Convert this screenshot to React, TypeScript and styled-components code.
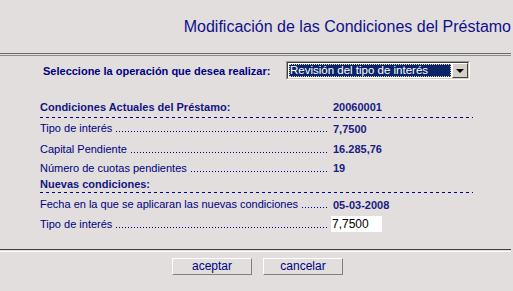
import React from "react";
import styled, { createGlobalStyle } from "styled-components";

const GlobalStyle = createGlobalStyle`
  html, body {
    margin: 0;
    padding: 0;
    background: #e1dedd;
  }
  body {
    font-family: "Liberation Sans", Arial, sans-serif;
  }
`;

const Page = styled.div`
  width: 513px;
  height: 291px;
  background: #e1dedd;
  color: #000080;
  overflow: hidden;
  display: flex;
  flex-direction: column;
`;

const Header = styled.div`
  height: 53px;
  display: flex;
  align-items: center;
  justify-content: flex-end;
  padding: 1px 2px 0 0;
  box-sizing: border-box;
`;

const Title = styled.h1`
  margin: 0;
  font-size: 16px;
  font-weight: normal;
  color: #10108a;
  white-space: nowrap;
`;

const Rule = styled.div<{ $light?: boolean }>`
  height: 1px;
  border-top: 1px solid ${(p) => (p.$light ? "#404040" : "#6a6a6a")};
  border-bottom: 1px solid ${(p) => (p.$light ? "#ffffff" : "#8c8c8c")};
  margin-right: 2px;
`;

const Main = styled.div`
  height: 193px;
  padding: 5px 0 0 40px;
  box-sizing: border-box;
`;

const SelectRow = styled.div`
  height: 19px;
  margin-left: 3px;
  display: flex;
  align-items: center;
  gap: 3px;
`;

const SelectLabel = styled.span`
  font-size: 11px;
  font-weight: bold;
  white-space: nowrap;
  width: 240px;
`;

const SelectBox = styled.div`
  width: 184px;
  height: 19px;
  box-sizing: border-box;
  border: 1px solid #ffffff;
  border-top-color: #9a9a9a;
  border-left-color: #9a9a9a;
  display: flex;
`;

const SelectInner = styled.div`
  flex: 1;
  display: flex;
  border: 1px solid #404040;
  border-bottom-color: #d4d0c8;
  border-right-color: #d4d0c8;
  background: #ffffff;
`;

const SelectValue = styled.div`
  flex: 1;
  background: #0a246a;
  color: #ffffff;
  font-size: 11.5px;
  line-height: 13px;
  padding-left: 1px;
  margin: 1px;
  outline: 1px dotted #e8d68a;
  outline-offset: -1px;
  white-space: nowrap;
  overflow: hidden;
`;

const SelectButton = styled.div`
  width: 16px;
  box-sizing: border-box;
  background: #d4d0c8;
  border: 1px solid #ffffff;
  border-right-color: #404040;
  border-bottom-color: #404040;
  display: flex;
  align-items: center;
  justify-content: center;
`;

const Arrow = styled.span`
  width: 0;
  height: 0;
  border-left: 4px solid transparent;
  border-right: 4px solid transparent;
  border-top: 4px solid #000000;
  margin-top: 1px;
`;

const Table = styled.div`
  margin-top: 17px;
  width: 433px;
  display: flex;
  flex-direction: column;
`;

const Row = styled.div<{ $h: number }>`
  height: ${(p) => p.$h}px;
  display: flex;
  align-items: center;
  font-size: 11px;
`;

const LabelCell = styled.div`
  width: 290px;
  display: flex;
  align-items: flex-end;
  line-height: 13px;
  white-space: nowrap;
`;

const Label = styled.span<{ $bold?: boolean }>`
  font-weight: ${(p) => (p.$bold ? "bold" : "normal")};
  font-size: 11px;
  color: ${(p) => (p.$bold ? "#141482" : "#000080")};
  padding-right: 4px;
`;

const Leader = styled.span`
  flex: 1;
  height: 1px;
  margin: 0 3px 3px 0;
  background: repeating-linear-gradient(to right, #000080 0 1px, transparent 1px 3px);
`;

const Value = styled.span`
  margin-left: 3px;
  font-weight: bold;
  font-size: 11px;
  color: #1a1a82;
`;

const Dash = styled.div`
  height: 1px;
  background: repeating-linear-gradient(to right, #000080 0 3px, transparent 3px 6px);
`;

const Input = styled.input`
  margin-left: 1px;
  width: 51px;
  height: 16px;
  box-sizing: border-box;
  border: none;
  padding: 0 0 0 1px;
  background: #ffffff;
  font-family: "Liberation Sans", Arial, sans-serif;
  font-size: 12px;
  color: #000000;
  outline: none;
`;

const ButtonBar = styled.div`
  display: flex;
  justify-content: center;
  gap: 11px;
  padding: 6px 0 0 2px;
`;

const Button = styled.button`
  width: 80px;
  height: 17px;
  box-sizing: border-box;
  padding: 0;
  background: #e1dedd;
  border: 1px solid #ffffff;
  border-right-color: #808080;
  border-bottom-color: #808080;
  font-family: "Liberation Sans", Arial, sans-serif;
  font-size: 12px;
  color: #000080;
  line-height: 13px;
`;

type Line = {
  label: string;
  value?: string;
  h: number;
  bold?: boolean;
  dashAfter?: boolean;
  input?: string;
};

const lines: Line[] = [
  { label: "Condiciones Actuales del Préstamo:", value: "20060001", h: 20, bold: true, dashAfter: true },
  { label: "Tipo de interés", value: "7,7500", h: 21 },
  { label: "Capital Pendiente", value: "16.285,76", h: 20 },
  { label: "Número de cuotas pendientes", value: "19", h: 18 },
  { label: "Nuevas condiciones:", h: 15, bold: true, dashAfter: true },
  { label: "Fecha en la que se aplicaran las nuevas condiciones", value: "05-03-2008", h: 23 },
  { label: "Tipo de interés", input: "7,7500", h: 16 },
];

export default function App() {
  return (
    <Page>
      <GlobalStyle />
      <Header>
        <Title>Modificación de las Condiciones del Préstamo</Title>
      </Header>
      <Rule />
      <Main>
        <SelectRow>
          <SelectLabel>Seleccione la operación que desea realizar:</SelectLabel>
          <SelectBox>
            <SelectInner>
              <SelectValue>Revisión del tipo de interés</SelectValue>
              <SelectButton>
                <Arrow />
              </SelectButton>
            </SelectInner>
          </SelectBox>
        </SelectRow>
        <Table>
          {lines.map((l, i) => (
            <React.Fragment key={i}>
              <Row $h={l.h}>
                <LabelCell>
                  <Label $bold={l.bold}>{l.label}</Label>
                  {!l.bold && <Leader />}
                </LabelCell>
                {l.value && <Value>{l.value}</Value>}
                {l.input && <Input defaultValue={l.input} />}
              </Row>
              {l.dashAfter && <Dash />}
            </React.Fragment>
          ))}
        </Table>
      </Main>
      <Rule $light />
      <ButtonBar>
        <Button>aceptar</Button>
        <Button>cancelar</Button>
      </ButtonBar>
    </Page>
  );
}
